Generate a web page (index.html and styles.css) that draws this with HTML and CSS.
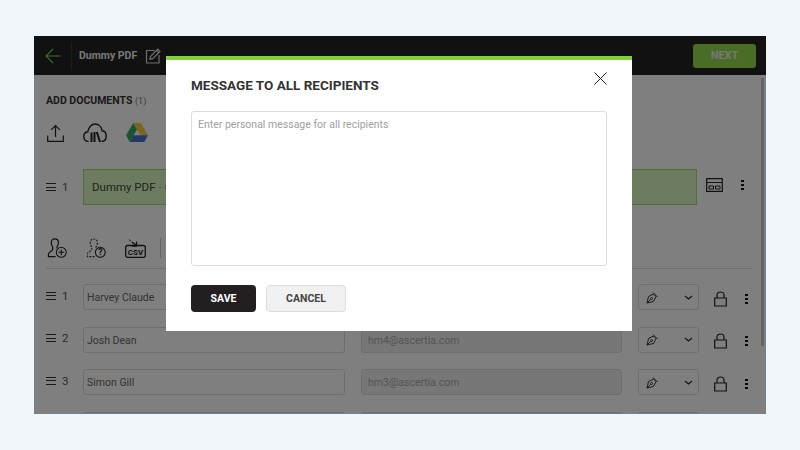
FILE: index.html
```html
<!DOCTYPE html>
<html lang="en">
<head>
    <meta charset="UTF-8">
    <title>Message to all recipients</title>
    <link rel="stylesheet" href="styles.css">
</head>
<body>
    <div class="app">
        <header class="topbar">
            <svg class="back" width="16" height="16" viewBox="0 0 16 16"><path d="M15.500 8H1M8 1 1 8l7 7" fill="none" stroke="#8fd14f" stroke-width="1.100"/></svg>
            <span class="topbar-line"></span>
            <span class="doc-title">Dummy PDF</span>
            <svg class="edit" width="16" height="16" viewBox="0 0 16 16"><path d="M9.500 2.500H1.500v12.500h12.500V7" fill="none" stroke="#ddd" stroke-width="1.200"/><path d="M5.500 8.500 12.800 1.200l2.200 2.200-7.300 7.300-2.800.6zM11.500 2.500l2.200 2.200" fill="none" stroke="#ddd" stroke-width="1.200"/></svg>
            <button class="next">NEXT</button>
        </header>

        <main class="content">
            <h2 class="section-title">ADD DOCUMENTS <small>(1)</small></h2>
            <div class="tool-row doc-tools">
                <svg width="17" height="18" viewBox="0 0 17 18"><path d="M8.500 13V1.500M4.200 5.800 8.500 1.500l4.300 4.300M.7 11.500v5.800h15.600v-5.800" fill="none" stroke="#222" stroke-width="1.200"/></svg>
                <svg width="24" height="20" viewBox="0 0 24 20"><path d="M5.500 18.500C2.500 18.500.8 16.300.8 13.500c0-2.600 1.700-4.500 4-4.800C5.500 4.300 8.500 1 12 1c3.700 0 6.500 3 7.200 6.800 2.600.3 4 2.700 4 5.200 0 2.800-1.500 5.500-4.700 5.500" fill="none" stroke="#222" stroke-width="1.400"/><path d="M8.500 19V9.500M11.500 19V9M13.800 9l3.200 10" fill="none" stroke="#222" stroke-width="2"/></svg>
                <svg width="22" height="19" viewBox="0 0 23 20"><path d="M7.500 0h8l7.500 13h-8z" fill="#f6c944"/><path d="M7.500 0 0 13l3.800 7 7.700-13.200z" fill="#3aa76a"/><path d="M3.800 20h15.400L23 13H7.700z" fill="#4a6fc9"/></svg>
            </div>

            <div class="doc-row">
                <span class="handle"><span class="bars"></span>1</span>
                <div class="doc-box">Dummy PDF <span class="doc-size">- 68 KB</span></div>
                <svg class="layout-icon" width="17" height="14" viewBox="0 0 17 14"><path d="M.7.700h15.600v12.600H.7zM.7 4.500h15.600" fill="none" stroke="#222" stroke-width="1.200"/><path d="M3 8h4.500v3H3zM9.500 8H14v3H9.500z" fill="none" stroke="#222"/></svg>
                <span class="dots"></span>
            </div>

            <div class="tool-row recipients-tools">
                <svg width="20" height="20" viewBox="0 0 21 21"><path d="M9 19.500H1.500v-2.500c0-2.500 4-3 4.500-5V9.500C5 8.500 4.500 6.500 4.500 5c0-2.700 1.600-4 3.700-4s3.800 1.300 3.800 4c0 1.500-.5 3.500-1.500 4.500V11" fill="none" stroke="#222" stroke-width="1.300"/><circle cx="15" cy="15" r="5.200" fill="none" stroke="#222" stroke-width="1.100"/><path d="M15 12v6M12 15h6" stroke="#222" stroke-width="1.100"/></svg>
                <svg width="20" height="20" viewBox="0 0 21 21"><path d="M9 19.500H1.500v-2.500c0-2.500 4-3 4.500-5V9.500C5 8.500 4.500 6.500 4.500 5c0-2.700 1.600-4 3.700-4s3.800 1.300 3.800 4c0 1.500-.5 3.500-1.500 4.500V11" fill="none" stroke="#333" stroke-width="1.200" stroke-dasharray="2 1.300"/><circle cx="15" cy="15" r="5.200" fill="none" stroke="#222" stroke-width="1.100"/><text class="help-mark" x="15" y="18.300" text-anchor="middle">?</text></svg>
                <svg width="21" height="19" viewBox="0 0 21 19"><path d="M4 .5l2 1.800" stroke="#333" fill="none"/><path d="M7 3l4 3.500M11.500 2.500v4.500H7" fill="none" stroke="#222" stroke-width="1.300"/><rect x=".7" y="6.500" width="19.600" height="11.800" rx="2" fill="none" stroke="#222" stroke-width="1.300"/><text class="csv-mark" x="10.500" y="15.500" text-anchor="middle">CSV</text></svg>
                <span class="tool-line"></span>
            </div>

            <div class="rows">
                <div class="row">
                    <span class="handle"><span class="bars"></span>1</span>
                    <div class="field">Harvey Claude</div>
                    <div class="field email">hm2@ascertia.com</div>
                    <div class="role">
                        <svg width="13" height="13" viewBox="0 0 13 13"><path d="M1 12 2.500 5.500 7.500 3l2.500 2.500L7.500 10.500zM1 12l3.800-3.800M7 1.500l4.500 4.500" fill="none" stroke="#222" stroke-width=".9"/><circle cx="5.500" cy="7.500" r="1" fill="none" stroke="#222" stroke-width=".8"/></svg>
                        <svg width="9" height="5" viewBox="0 0 9 5"><path d="M1 1l3.500 3L8 1" fill="none" stroke="#222" stroke-width="1.100"/></svg>
                    </div>
                    <svg class="lock" width="13" height="16" viewBox="0 0 13 16"><path d="M.7 7h11.600v8H.7zM3 7V4c0-4 7-4 7 0v3" fill="none" stroke="#222" stroke-width="1.200"/></svg>
                    <span class="dots"></span>
                </div>
                <div class="row">
                    <span class="handle"><span class="bars"></span>2</span>
                    <div class="field">Josh Dean</div>
                    <div class="field email">hm4@ascertia.com</div>
                    <div class="role">
                        <svg width="13" height="13" viewBox="0 0 13 13"><path d="M1 12 2.500 5.500 7.500 3l2.500 2.500L7.500 10.500zM1 12l3.800-3.800M7 1.500l4.500 4.500" fill="none" stroke="#222" stroke-width=".9"/><circle cx="5.500" cy="7.500" r="1" fill="none" stroke="#222" stroke-width=".8"/></svg>
                        <svg width="9" height="5" viewBox="0 0 9 5"><path d="M1 1l3.500 3L8 1" fill="none" stroke="#222" stroke-width="1.100"/></svg>
                    </div>
                    <svg class="lock" width="13" height="16" viewBox="0 0 13 16"><path d="M.7 7h11.600v8H.7zM3 7V4c0-4 7-4 7 0v3" fill="none" stroke="#222" stroke-width="1.200"/></svg>
                    <span class="dots"></span>
                </div>
                <div class="row">
                    <span class="handle"><span class="bars"></span>3</span>
                    <div class="field">Simon Gill</div>
                    <div class="field email">hm3@ascertia.com</div>
                    <div class="role">
                        <svg width="13" height="13" viewBox="0 0 13 13"><path d="M1 12 2.500 5.500 7.500 3l2.500 2.500L7.500 10.500zM1 12l3.800-3.800M7 1.500l4.500 4.500" fill="none" stroke="#222" stroke-width=".9"/><circle cx="5.500" cy="7.500" r="1" fill="none" stroke="#222" stroke-width=".8"/></svg>
                        <svg width="9" height="5" viewBox="0 0 9 5"><path d="M1 1l3.500 3L8 1" fill="none" stroke="#222" stroke-width="1.100"/></svg>
                    </div>
                    <svg class="lock" width="13" height="16" viewBox="0 0 13 16"><path d="M.7 7h11.600v8H.7zM3 7V4c0-4 7-4 7 0v3" fill="none" stroke="#222" stroke-width="1.200"/></svg>
                    <span class="dots"></span>
                </div>
                <div class="row">
                    <span class="handle"></span>
                    <div class="field"></div>
                    <div class="field email"></div>
                    <div class="role"></div>
                </div>
            </div>
        </main>

        <div class="scrollbar"></div>
        <div class="overlay"></div>

        <section class="modal">
            <h2 class="modal-title">MESSAGE TO ALL RECIPIENTS</h2>
            <svg class="close" width="13" height="13" viewBox="0 0 13 13"><path d="M.5.500l12 12M12.500.500l-12 12" stroke="#222" stroke-width="1"/></svg>
            <textarea class="message" placeholder="Enter personal message for all recipients"></textarea>
            <div class="modal-buttons">
                <button class="btn btn-save">SAVE</button>
                <button class="btn btn-cancel">CANCEL</button>
            </div>
        </section>
    </div>
</body>
</html>
```

FILE: styles.css
```css
* {
    margin: 0;
    padding: 0;
    box-sizing: border-box;
}

body {
    font-family: 'Roboto', sans-serif;
    background-color: #f1f6fa;
    padding: 36px 34px;
    height: 450px;
    overflow: hidden;
}

.app {
    position: relative;
    width: 732px;
    height: 378px;
    background-color: #fff;
    overflow: hidden;
}

.topbar {
    display: flex;
    align-items: center;
    height: 39px;
    padding: 0 10px 0 11px;
    background-color: #222;
}

.back {
    margin-right: 10px;
}

.topbar-line {
    width: 1px;
    height: 28px;
    background-color: #3a3a3a;
    margin-right: 7px;
}

.doc-title {
    color: #eee;
    font-size: 10.500px;
    font-weight: 700;
    margin-right: 8px;
}

.next {
    margin-left: auto;
    width: 63px;
    height: 24px;
    border: none;
    border-radius: 3px;
    background-color: #93d94c;
    color: #eee;
    font-family: inherit;
    font-size: 11px;
    font-weight: 700;
}

.content {
    padding: 19px 14px 0 12px;
}

.section-title {
    font-size: 10.500px;
    font-weight: 700;
    line-height: 13px;
    color: #333;
}

.section-title small {
    font-size: 9px;
    font-weight: 400;
    color: #777;
}

.tool-row {
    display: flex;
    align-items: center;
    height: 23px;
}

.doc-tools {
    gap: 19px;
    margin-top: 13px;
    padding-left: 1px;
}

.doc-row {
    display: flex;
    align-items: center;
    height: 36px;
    margin-top: 25px;
}

.handle {
    display: flex;
    align-items: center;
    gap: 6px;
    width: 37px;
    flex-shrink: 0;
    font-size: 11.500px;
    color: #555;
}

.bars {
    width: 10px;
    height: 8px;
    border-top: 1px solid #333;
    border-bottom: 1px solid #333;
    position: relative;
}

.bars::after {
    content: "";
    position: absolute;
    left: 0;
    right: 0;
    top: 2.500px;
    height: 1px;
    background-color: #333;
}

.doc-box {
    width: 614px;
    height: 36px;
    line-height: 34px;
    padding-left: 8px;
    background-color: #daf8c0;
    border: 1px solid #a6dc70;
    font-size: 11.500px;
    color: #444;
}

.doc-size {
    color: #999;
}

.layout-icon {
    margin-left: 9px;
    margin-top: -5px;
}

.dots {
    width: 3px;
    height: 11px;
    margin-left: 18px;
    background-image: radial-gradient(circle, #111 1.400px, transparent 1.500px);
    background-size: 3px 4px;
}

.doc-row .dots {
    margin-top: -6px;
}

.recipients-tools {
    margin-top: 31px;
    height: 24px;
    gap: 19px;
    padding-left: 1px;
}

.tool-line {
    width: 1px;
    height: 20px;
    background-color: #ccc;
    margin-left: -5px;
}

.help-mark {
    font-size: 9px;
    font-weight: 700;
    fill: #222;
}

.csv-mark {
    font-size: 8px;
    font-weight: 700;
    fill: #222;
}

.rows {
    margin-top: 8px;
    padding-top: 15px;
    border-top: 1px solid #ddd;
}

.row {
    display: flex;
    align-items: center;
    height: 26px;
    margin-bottom: 16.500px;
}

.row .handle {
    margin-top: -3px;
}

.field {
    width: 262px;
    height: 26px;
    margin-right: 16px;
    padding-left: 3px;
    line-height: 26px;
    font-size: 10.500px;
    color: #666;
    border: 1px solid #ddd;
    border-radius: 3px;
    flex-shrink: 0;
}

.email {
    width: 261px;
    background-color: #eee;
    color: #aaa;
    padding-left: 6px;
}

.role {
    display: flex;
    align-items: center;
    justify-content: space-between;
    width: 61px;
    height: 26px;
    padding: 0 5px 0 7px;
    border: 1px solid #ddd;
    border-radius: 3px;
    flex-shrink: 0;
}

.lock {
    margin-left: 15px;
    margin-top: 3px;
}

.row .dots {
    margin-left: 18px;
    margin-top: 2px;
}

.scrollbar {
    position: absolute;
    top: 42px;
    right: 2px;
    width: 3px;
    height: 268px;
    background-color: #ccc;
}

.overlay {
    position: absolute;
    inset: 0;
    background-color: rgba(0, 0, 0, 0.5);
}

.modal {
    position: absolute;
    top: 20px;
    left: 132px;
    width: 466px;
    height: 275px;
    padding: 16px 25px 0;
    background-color: #fff;
    border-top: 4px solid #82d13c;
}

.modal-title {
    font-size: 13.500px;
    font-weight: 700;
    line-height: 18px;
    color: #333;
}

.close {
    position: absolute;
    top: 12px;
    right: 25px;
}

.message {
    display: block;
    width: 416px;
    height: 155px;
    margin-top: 17px;
    padding: 6px;
    border: 1px solid #ddd;
    border-radius: 3px;
    font-family: inherit;
    font-size: 10.500px;
    resize: none;
}

.message::placeholder {
    color: #a0a0a0;
}

.modal-buttons {
    display: flex;
    gap: 10px;
    margin-top: 19px;
}

.btn {
    height: 27px;
    border-radius: 4px;
    font-family: inherit;
    font-size: 10.500px;
    font-weight: 700;
}

.btn-save {
    width: 65px;
    border: none;
    background-color: #231f20;
    color: #fff;
}

.btn-cancel {
    width: 80px;
    border: 1px solid #ddd;
    background-color: #f1f1f1;
    color: #444;
}
```
